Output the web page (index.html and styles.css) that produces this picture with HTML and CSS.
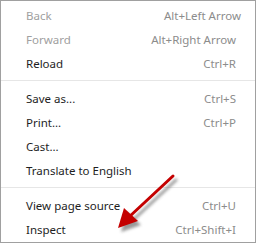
FILE: index.html
```html
<!DOCTYPE html>
<html>
<head>
<meta charset="utf-8">
<link rel="stylesheet" href="styles.css">
</head>
<body>
<div class="menu">
  <div class="group">
    <div class="item disabled"><span class="label">Back</span><span class="key key-wide">Alt+Left Arrow</span></div>
    <div class="item disabled"><span class="label">Forward</span><span class="key">Alt+Right Arrow</span></div>
    <div class="item"><span class="label">Reload</span><span class="key">Ctrl+R</span></div>
  </div>
  <div class="sep"></div>
  <div class="group">
    <div class="item"><span class="label">Save as...</span><span class="key">Ctrl+S</span></div>
    <div class="item"><span class="label">Print...</span><span class="key">Ctrl+P</span></div>
    <div class="item"><span class="label">Cast...</span><span class="key"></span></div>
    <div class="item"><span class="label">Translate to English</span><span class="key"></span></div>
  </div>
  <div class="sep"></div>
  <div class="group">
    <div class="item"><span class="label">View page source</span><span class="key">Ctrl+U</span></div>
    <div class="item"><span class="label">Inspect</span><span class="key">Ctrl+Shift+I</span></div>
  </div>
  <svg class="arrow" width="80" height="70" viewBox="0 0 80 70">
    <defs>
      <filter id="blur" x="-20%" y="-20%" width="140%" height="140%"><feGaussianBlur stdDeviation="1.6"/></filter>
    </defs>
    <g transform="translate(3,4)" filter="url(#blur)" opacity="0.6">
      <line x1="60" y1="5" x2="16" y2="46" stroke="#555" stroke-width="3" stroke-linecap="round"/>
      <polygon points="5,57 11,37 25,50" fill="#555"/>
    </g>
    <line x1="60" y1="5" x2="16" y2="46" stroke="#c40000" stroke-width="3" stroke-linecap="round"/>
    <polygon points="5,57 11,37 25,50" fill="#c40000"/>
  </svg>
</div>
</body>
</html>
```
FILE: styles.css
```css
html, body {
  margin: 0;
  padding: 0;
  background: #ffffff;
}
.menu {
  position: relative;
  box-sizing: border-box;
  width: 256px;
  height: 243px;
  border: 1px solid #a0a0a0;
  padding: 2px 0 0;
  font-family: "Noto Sans", sans-serif;
  font-size: 11.5px;
  color: #1e1e1e;
  display: flex;
  flex-direction: column;
}
.group {
  display: flex;
  flex-direction: column;
}
.item {
  height: 24px;
  flex-shrink: 0;
  display: flex;
  align-items: center;
  justify-content: space-between;
  padding: 0 19px 0 25px;
}
.item.disabled .label {
  color: #a0a0a0;
}
.key {
  color: #8c8c8c;
}
.key-wide {
  margin-right: -5px;
}
.sep {
  height: 1px;
  flex-shrink: 0;
  background: #e6e6e6;
  margin: 5px 0 5px;
}
.arrow {
  position: absolute;
  left: 112px;
  top: 170px;
}
```
